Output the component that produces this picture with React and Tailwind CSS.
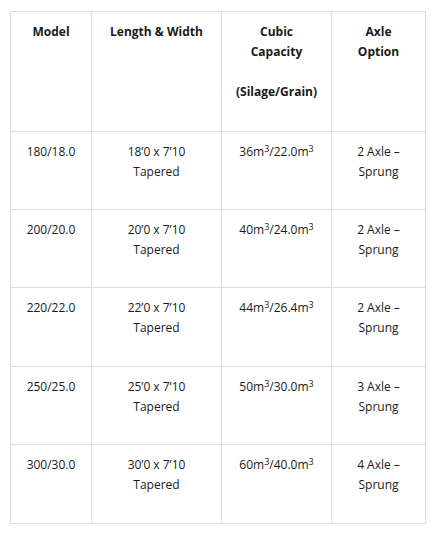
const headers = [
  ['Model'],
  ['Length & Width'],
  ['Cubic', 'Capacity', '', '(Silage/Grain)'],
  ['Axle', 'Option'],
]

const Cubic = ({ a, b }) => (
  <>
    {a}m<sup>3</sup>/{b}m<sup>3</sup>
  </>
)

const rows = [
  { model: '180/18.0', len: '18’0 x 7’10', a: '36', b: '22.0', axle: '2 Axle –', h: 'h-[78px]' },
  { model: '200/20.0', len: '20’0 x 7’10', a: '40', b: '24.0', axle: '2 Axle –', h: 'h-[78px]' },
  { model: '220/22.0', len: '22’0 x 7’10', a: '44', b: '26.4', axle: '2 Axle –', h: 'h-[79px]' },
  { model: '250/25.0', len: '25’0 x 7’10', a: '50', b: '30.0', axle: '3 Axle –', h: 'h-[78px]' },
  { model: '300/30.0', len: '30’0 x 7’10', a: '60', b: '40.0', axle: '4 Axle –', h: 'h-[79px]' },
]

const cell = 'border-r border-b border-[#dddddd] px-[10px] pt-[10px] text-center'

export default function App() {
  return (
    <div
      className="w-[442px] h-[538px] bg-white pl-[10px] pt-[11px] text-[12px] leading-5 text-[#1a1a1a]"
      style={{ fontFamily: '"Open Sans", "Liberation Sans", sans-serif' }}
    >
      <div className="w-[416px] border-l border-t border-[#dddddd]">
        <div className="grid grid-cols-[81px_130px_110px_94px] h-[120px] font-bold">
          {headers.map((lines, i) => (
            <div key={i} className={cell}>
              {lines.map((l, j) => (
                <div key={j} className="h-5">{l}</div>
              ))}
            </div>
          ))}
        </div>
        {rows.map(r => (
          <div key={r.model} className={`grid grid-cols-[81px_130px_110px_94px] ${r.h}`}>
            <div className={cell}>{r.model}</div>
            <div className={cell}>
              <div>{r.len}</div>
              <div>Tapered</div>
            </div>
            <div className={cell}>
              <Cubic a={r.a} b={r.b} />
            </div>
            <div className={cell}>
              <div>{r.axle}</div>
              <div>Sprung</div>
            </div>
          </div>
        ))}
      </div>
    </div>
  )
}
